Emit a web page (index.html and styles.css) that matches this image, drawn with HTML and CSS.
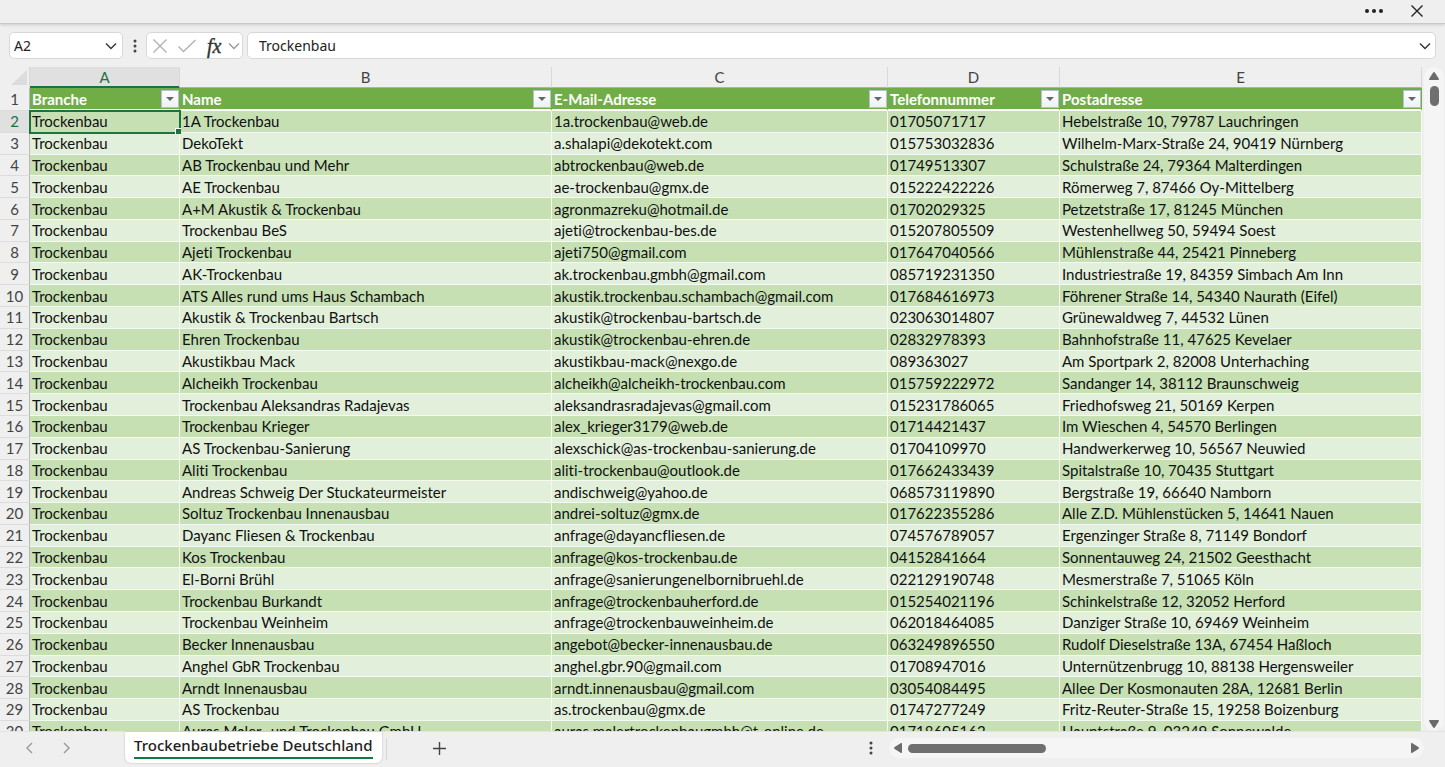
FILE: index.html
```html
<!DOCTYPE html>
<html lang="de">
<head>
    <meta charset="UTF-8">
    <meta name="viewport" content="width=device-width, initial-scale=1.0">
    <title>Trockenbaubetriebe Deutschland</title>
    <link rel="stylesheet" href="styles.css">
</head>
<body>
    <header class="title-bar">
        <button class="icon-button" aria-label="Mehr">
            <svg width="20" height="20" viewBox="0 0 20 20" fill="#222"><circle cx="3" cy="10" r="2"/><circle cx="10" cy="10" r="2"/><circle cx="17" cy="10" r="2"/></svg>
        </button>
        <button class="icon-button" aria-label="Schließen">
            <svg width="14" height="14" viewBox="0 0 14 14" fill="none" stroke="#222" stroke-width="1.4"><path d="M1.5 1.5l11 11M12.5 1.5l-11 11"/></svg>
        </button>
    </header>

    <div class="formula-bar">
        <div class="name-box">
            <input type="text" value="A2" aria-label="Namenfeld">
            <button class="icon-button" aria-label="Namen anzeigen">
                <svg width="12" height="8" viewBox="0 0 12 8" fill="none" stroke="#333" stroke-width="1.4"><path d="M1 1.5l5 5 5-5"/></svg>
            </button>
        </div>
        <svg class="grip" width="4" height="14" viewBox="0 0 4 14" fill="#444"><circle cx="2" cy="2" r="1.5"/><circle cx="2" cy="7" r="1.5"/><circle cx="2" cy="12" r="1.5"/></svg>
        <div class="formula-tools">
            <button class="icon-button" aria-label="Abbrechen">
                <svg width="14" height="14" viewBox="0 0 14 14" fill="none" stroke="#b0b0b0" stroke-width="1.3"><path d="M.5.5l13 13M13.5.5l-13 13"/></svg>
            </button>
            <button class="icon-button" aria-label="Eingeben">
                <svg width="18" height="14" viewBox="0 0 18 14" fill="none" stroke="#b0b0b0" stroke-width="1.3"><path d="M.5 7.5l5 5L17.5 1"/></svg>
            </button>
            <button class="fx-button">fx</button>
            <button class="icon-button" aria-label="Funktionen">
                <svg width="12" height="8" viewBox="0 0 12 8" fill="none" stroke="#999" stroke-width="1.3"><path d="M1 1.5l5 5 5-5"/></svg>
            </button>
        </div>
        <div class="formula-box">
            <input type="text" value="Trockenbau" aria-label="Bearbeitungsleiste">
            <button class="icon-button" aria-label="Erweitern">
                <svg width="12" height="8" viewBox="0 0 12 8" fill="none" stroke="#333" stroke-width="1.4"><path d="M1 1.5l5 5 5-5"/></svg>
            </button>
        </div>
    </div>

    <main class="workspace">
        <div class="grid-area">
            <table class="sheet">
                <colgroup>
                    <col class="col-num"><col class="col-a"><col class="col-b"><col class="col-c"><col class="col-d"><col>
                </colgroup>
                <thead>
                    <tr class="letters"><th class="corner"><svg width="16" height="15" viewBox="0 0 16 15" fill="#dcdcdc"><path d="M16 0v15H0z"/></svg></th><th class="active">A</th><th>B</th><th>C</th><th>D</th><th>E</th></tr>
                    <tr class="titles">
                        <th>1</th>
                        <td><div class="field">Branche <button class="filter" aria-label="Branche filtern"></button></div></td>
                        <td><div class="field">Name <button class="filter" aria-label="Name filtern"></button></div></td>
                        <td><div class="field">E-Mail-Adresse <button class="filter" aria-label="E-Mail-Adresse filtern"></button></div></td>
                        <td><div class="field">Telefonnummer <button class="filter" aria-label="Telefonnummer filtern"></button></div></td>
                        <td><div class="field">Postadresse <button class="filter" aria-label="Postadresse filtern"></button></div></td>
                    </tr>
                </thead>
                <tbody>
                    <tr><th class="active">2</th><td class="selected">Trockenbau</td><td>1A Trockenbau</td><td>1a.trockenbau@web.de</td><td>01705071717</td><td>Hebelstraße 10, 79787 Lauchringen</td></tr>
                    <tr><th>3</th><td>Trockenbau</td><td>DekoTekt</td><td>a.shalapi@dekotekt.com</td><td>015753032836</td><td>Wilhelm-Marx-Straße 24, 90419 Nürnberg</td></tr>
                    <tr><th>4</th><td>Trockenbau</td><td>AB Trockenbau und Mehr</td><td>abtrockenbau@web.de</td><td>01749513307</td><td>Schulstraße 24, 79364 Malterdingen</td></tr>
                    <tr><th>5</th><td>Trockenbau</td><td>AE Trockenbau</td><td>ae-trockenbau@gmx.de</td><td>015222422226</td><td>Römerweg 7, 87466 Oy-Mittelberg</td></tr>
                    <tr><th>6</th><td>Trockenbau</td><td>A+M Akustik &amp; Trockenbau</td><td>agronmazreku@hotmail.de</td><td>01702029325</td><td>Petzetstraße 17, 81245 München</td></tr>
                    <tr><th>7</th><td>Trockenbau</td><td>Trockenbau BeS</td><td>ajeti@trockenbau-bes.de</td><td>015207805509</td><td>Westenhellweg 50, 59494 Soest</td></tr>
                    <tr><th>8</th><td>Trockenbau</td><td>Ajeti Trockenbau</td><td>ajeti750@gmail.com</td><td>017647040566</td><td>Mühlenstraße 44, 25421 Pinneberg</td></tr>
                    <tr><th>9</th><td>Trockenbau</td><td>AK-Trockenbau</td><td>ak.trockenbau.gmbh@gmail.com</td><td>085719231350</td><td>Industriestraße 19, 84359 Simbach Am Inn</td></tr>
                    <tr><th>10</th><td>Trockenbau</td><td>ATS Alles rund ums Haus Schambach</td><td>akustik.trockenbau.schambach@gmail.com</td><td>017684616973</td><td>Föhrener Straße 14, 54340 Naurath (Eifel)</td></tr>
                    <tr><th>11</th><td>Trockenbau</td><td>Akustik &amp; Trockenbau Bartsch</td><td>akustik@trockenbau-bartsch.de</td><td>023063014807</td><td>Grünewaldweg 7, 44532 Lünen</td></tr>
                    <tr><th>12</th><td>Trockenbau</td><td>Ehren Trockenbau</td><td>akustik@trockenbau-ehren.de</td><td>02832978393</td><td>Bahnhofstraße 11, 47625 Kevelaer</td></tr>
                    <tr><th>13</th><td>Trockenbau</td><td>Akustikbau Mack</td><td>akustikbau-mack@nexgo.de</td><td>089363027</td><td>Am Sportpark 2, 82008 Unterhaching</td></tr>
                    <tr><th>14</th><td>Trockenbau</td><td>Alcheikh Trockenbau</td><td>alcheikh@alcheikh-trockenbau.com</td><td>015759222972</td><td>Sandanger 14, 38112 Braunschweig</td></tr>
                    <tr><th>15</th><td>Trockenbau</td><td>Trockenbau Aleksandras Radajevas</td><td>aleksandrasradajevas@gmail.com</td><td>015231786065</td><td>Friedhofsweg 21, 50169 Kerpen</td></tr>
                    <tr><th>16</th><td>Trockenbau</td><td>Trockenbau Krieger</td><td>alex_krieger3179@web.de</td><td>01714421437</td><td>Im Wieschen 4, 54570 Berlingen</td></tr>
                    <tr><th>17</th><td>Trockenbau</td><td>AS Trockenbau-Sanierung</td><td>alexschick@as-trockenbau-sanierung.de</td><td>01704109970</td><td>Handwerkerweg 10, 56567 Neuwied</td></tr>
                    <tr><th>18</th><td>Trockenbau</td><td>Aliti Trockenbau</td><td>aliti-trockenbau@outlook.de</td><td>017662433439</td><td>Spitalstraße 10, 70435 Stuttgart</td></tr>
                    <tr><th>19</th><td>Trockenbau</td><td>Andreas Schweig Der Stuckateurmeister</td><td>andischweig@yahoo.de</td><td>068573119890</td><td>Bergstraße 19, 66640 Namborn</td></tr>
                    <tr><th>20</th><td>Trockenbau</td><td>Soltuz Trockenbau Innenausbau</td><td>andrei-soltuz@gmx.de</td><td>017622355286</td><td>Alle Z.D. Mühlenstücken 5, 14641 Nauen</td></tr>
                    <tr><th>21</th><td>Trockenbau</td><td>Dayanc Fliesen &amp; Trockenbau</td><td>anfrage@dayancfliesen.de</td><td>074576789057</td><td>Ergenzinger Straße 8, 71149 Bondorf</td></tr>
                    <tr><th>22</th><td>Trockenbau</td><td>Kos Trockenbau</td><td>anfrage@kos-trockenbau.de</td><td>04152841664</td><td>Sonnentauweg 24, 21502 Geesthacht</td></tr>
                    <tr><th>23</th><td>Trockenbau</td><td>El-Borni Brühl</td><td>anfrage@sanierungenelbornibruehl.de</td><td>022129190748</td><td>Mesmerstraße 7, 51065 Köln</td></tr>
                    <tr><th>24</th><td>Trockenbau</td><td>Trockenbau Burkandt</td><td>anfrage@trockenbauherford.de</td><td>015254021196</td><td>Schinkelstraße 12, 32052 Herford</td></tr>
                    <tr><th>25</th><td>Trockenbau</td><td>Trockenbau Weinheim</td><td>anfrage@trockenbauweinheim.de</td><td>062018464085</td><td>Danziger Straße 10, 69469 Weinheim</td></tr>
                    <tr><th>26</th><td>Trockenbau</td><td>Becker Innenausbau</td><td>angebot@becker-innenausbau.de</td><td>063249896550</td><td>Rudolf Dieselstraße 13A, 67454 Haßloch</td></tr>
                    <tr><th>27</th><td>Trockenbau</td><td>Anghel GbR Trockenbau</td><td>anghel.gbr.90@gmail.com</td><td>01708947016</td><td>Unternützenbrugg 10, 88138 Hergensweiler</td></tr>
                    <tr><th>28</th><td>Trockenbau</td><td>Arndt Innenausbau</td><td>arndt.innenausbau@gmail.com</td><td>03054084495</td><td>Allee Der Kosmonauten 28A, 12681 Berlin</td></tr>
                    <tr><th>29</th><td>Trockenbau</td><td>AS Trockenbau</td><td>as.trockenbau@gmx.de</td><td>01747277249</td><td>Fritz-Reuter-Straße 15, 19258 Boizenburg</td></tr>
                    <tr><th>30</th><td>Trockenbau</td><td>Auras Maler- und Trockenbau GmbH</td><td>auras.malertrockenbaugmbh@t-online.de</td><td>01718605162</td><td>Hauptstraße 9, 03249 Sonnewalde</td></tr>
                </tbody>
            </table>
        </div>
        <div class="scroll-y">
            <svg width="10" height="8" viewBox="0 0 10 8" fill="#6b6b6b"><path d="M5 0q.6 0 1 .7L10 7q.2 1-.8 1H.8Q-.2 8 0 7L4 .7Q4.4 0 5 0z"/></svg>
            <div class="thumb"></div>
            <svg class="end" width="10" height="8" viewBox="0 0 10 8" fill="#6b6b6b"><path d="M5 8q.6 0 1-.7L10 1q.2-1-.8-1H.8Q-.2 0 0 1l4 6.3q.4.7 1 .7z"/></svg>
        </div>
    </main>

    <footer class="tab-bar">
        <nav class="tab-nav">
            <button class="icon-button" aria-label="Vorheriges Blatt">
                <svg width="7" height="12" viewBox="0 0 7 12" fill="none" stroke="#999" stroke-width="1.4"><path d="M6 1L1 6l5 5"/></svg>
            </button>
            <button class="icon-button" aria-label="Nächstes Blatt">
                <svg width="7" height="12" viewBox="0 0 7 12" fill="none" stroke="#999" stroke-width="1.4"><path d="M1 1l5 5-5 5"/></svg>
            </button>
        </nav>
        <button class="tab"><span>Trockenbaubetriebe Deutschland</span></button>
        <div class="tab-divider"></div>
        <button class="icon-button add" aria-label="Neues Blatt">
            <svg width="13" height="13" viewBox="0 0 13 13" fill="none" stroke="#444" stroke-width="1.4"><path d="M6.5 0v13M0 6.5h13"/></svg>
        </button>
        <div class="scroll-group">
            <svg width="4" height="14" viewBox="0 0 4 14" fill="#444"><circle cx="2" cy="2" r="1.5"/><circle cx="2" cy="7" r="1.5"/><circle cx="2" cy="12" r="1.5"/></svg>
            <div class="scroll-x">
                <svg width="8" height="10" viewBox="0 0 8 10" fill="#6b6b6b"><path d="M0 5q0-.6.7-1L7 0q1-.2 1 .8v8.4q0 1-1 .8L.7 6Q0 5.6 0 5z"/></svg>
                <div class="thumb"></div>
                <svg class="end" width="8" height="10" viewBox="0 0 8 10" fill="#6b6b6b"><path d="M8 5q0-.6-.7-1L1 0Q0-.2 0 .8v8.4q0 1 1 .8l6.3-4q.7-.4.7-1z"/></svg>
            </div>
        </div>
    </footer>
</body>
</html>
```
FILE: styles.css
```css
:root {
    --chrome: #efefef;
    --chrome-line: #d8d8d8;
    --excel-green: #1a7340;
    --head-green: #70ad47;
    --band-dark: #c6e0b4;
    --band-light: #e2efda;
    --thumb: #6f6f6f;
    --ui-font: "Noto Sans", "Open Sans", sans-serif;
    --cell-font: Lato, "Open Sans", sans-serif;
}

* {
    margin: 0;
    padding: 0;
    box-sizing: border-box;
}

body {
    height: 100vh;
    display: flex;
    flex-direction: column;
    overflow: hidden;
    background: var(--chrome);
    font-family: var(--ui-font);
    color: #222;
}

button {
    background: none;
    border: none;
    font: inherit;
    color: inherit;
}

input {
    border: none;
    outline: none;
    background: none;
    font: inherit;
    color: inherit;
    min-width: 0;
    flex: 1;
}

.icon-button {
    display: flex;
    align-items: center;
    justify-content: center;
}

/* Top bars */
.title-bar {
    flex: none;
    height: 24px;
    display: flex;
    align-items: center;
    justify-content: flex-end;
    gap: 26px;
    padding: 0 21px 2px 0;
    border-bottom: 1px solid #c8c8c8;
    box-shadow: 0 1px 3px rgba(0, 0, 0, 0.15);
}

.formula-bar {
    flex: none;
    display: flex;
    align-items: center;
    height: 43px;
    padding: 0 9px;
    font-size: 14px;
}

.name-box,
.formula-tools,
.formula-box {
    display: flex;
    align-items: center;
    height: 27px;
    background: white;
    border: 1px solid var(--chrome-line);
    border-radius: 5px;
}

.name-box {
    width: 114px;
    padding: 0 5px 0 4px;
}

.grip {
    margin: 0 9px 0 10px;
}

.formula-tools {
    width: 97px;
    gap: 11px;
    padding-left: 6px;
}

.fx-button {
    margin-right: -4px;
    font: italic 20px/20px "Liberation Serif", serif;
    color: #333;
    -webkit-text-stroke: 0.4px #333;
}

.formula-box {
    flex: 1;
    margin-left: 4px;
    padding: 0 4px 0 11px;
}

/* Sheet */
.workspace {
    flex: 1;
    min-height: 0;
    display: flex;
}

.grid-area {
    flex: 1;
    min-width: 0;
    overflow: hidden;
}

.sheet {
    width: 100%;
    height: 676px;
    table-layout: fixed;
    border-collapse: separate;
    border-spacing: 0;
    font-family: var(--cell-font);
    font-size: 15px;
    font-variant-ligatures: none;
    line-height: 20px;
    color: #111;
}

.col-num {
    width: 30px;
}

.col-a {
    width: 150px;
}

.col-b {
    width: 372px;
}

.col-c {
    width: 336px;
}

.col-d {
    width: 172px;
}

.sheet th {
    font-weight: 400;
    color: #444;
    text-align: center;
    border-right: 1px solid #b8b8b8;
    border-bottom: 1px solid #dcdcdc;
}

.sheet td {
    padding: 1px 0 0 2px;
    line-height: 19px;
    white-space: nowrap;
    overflow: hidden;
    border-right: 1px solid #f4faf0;
    border-bottom: 1px solid #f4faf0;
}

.sheet .letters th {
    height: 21px;
    line-height: 19px;
    border-right-color: var(--chrome-line);
    border-bottom-color: #b0b0b0;
}

.sheet .letters .active {
    background: #e0e0e0;
    color: var(--excel-green);
    border-bottom-color: var(--excel-green);
    box-shadow: inset 0 -1px var(--excel-green);
}

.sheet .letters .corner {
    text-align: right;
    padding-right: 2px;
    border-bottom-color: var(--chrome);
}

.corner svg {
    display: block;
    margin-left: auto;
}

.sheet .titles td {
    height: 23px;
    background: var(--head-green);
    color: white;
    font-weight: 700;
    border-right-color: var(--head-green);
    border-bottom: 2px solid white;
}

.field {
    display: flex;
    align-items: center;
    justify-content: space-between;
}

.filter {
    width: 18px;
    height: 18px;
    display: flex;
    align-items: center;
    justify-content: center;
    background: linear-gradient(#ffffff, #eef0f5);
    border: 1px solid #b9bfcc;
}

.filter::after {
    content: "";
    border: 4px solid transparent;
    border-top-color: #666;
    border-bottom: none;
}

tbody tr:nth-child(odd) td {
    background: var(--band-dark);
}

tbody tr:nth-child(even) td {
    background: var(--band-light);
}

tbody .active {
    background: #e0e0e0;
}

.sheet tbody .active {
    color: var(--excel-green);
}

.sheet .selected {
    position: relative;
    overflow: visible;
    outline: 2px solid var(--excel-green);
    outline-offset: -1px;
}

/* fill handle */
.selected::after {
    content: "";
    position: absolute;
    right: -2px;
    bottom: -2px;
    width: 5px;
    height: 5px;
    background: var(--excel-green);
    border: 1px solid white;
    border-width: 1px 0 0 1px;
}

/* Scrollbars */
.scroll-y {
    flex: none;
    width: 20px;
    margin: 0 1px 0 2px;
    display: flex;
    flex-direction: column;
    align-items: center;
    padding: 5px 0 3px;
    background: #f5f5f5;
    border-radius: 10px;
}

.thumb {
    background: var(--thumb);
    border-radius: 5px;
}

.scroll-y .thumb {
    width: 9px;
    height: 20px;
    margin-top: 6px;
}

.scroll-y .end {
    margin-top: auto;
}

.scroll-x .thumb {
    width: 138px;
    height: 9px;
    margin-left: 6px;
}

.scroll-x .end {
    margin-left: auto;
}

/* Bottom bar */
.tab-bar {
    flex: none;
    height: 36px;
    display: flex;
    padding-right: 21px;
    border-top: 1px solid #e2e2e2;
}

.tab-nav {
    width: 125px;
    display: flex;
    gap: 30px;
    padding: 0 0 3px 26px;
    align-items: center;
}

.tab {
    height: 31px;
    padding: 0 9px 3px;
    background: white;
    border-radius: 0 0 6px 6px;
    box-shadow: 0 0 2px rgba(0, 0, 0, 0.25);
    font-size: 15px;
    font-weight: 500;
    line-height: 24px;
}

.tab span {
    display: block;
    border-bottom: 2px solid #107c41;
}

.tab-divider {
    width: 1px;
    height: 22px;
    margin: 6px 0 0 4px;
    background: var(--chrome-line);
}

.add {
    width: 106px;
    padding-bottom: 3px;
}

.scroll-group {
    width: 555px;
    margin-left: auto;
    display: flex;
    align-items: center;
    gap: 16px;
    padding-bottom: 3px;
}

.scroll-x {
    flex: 1;
    height: 20px;
    display: flex;
    align-items: center;
    padding: 0 5px;
    background: #f5f5f5;
    border-radius: 10px;
}
```
